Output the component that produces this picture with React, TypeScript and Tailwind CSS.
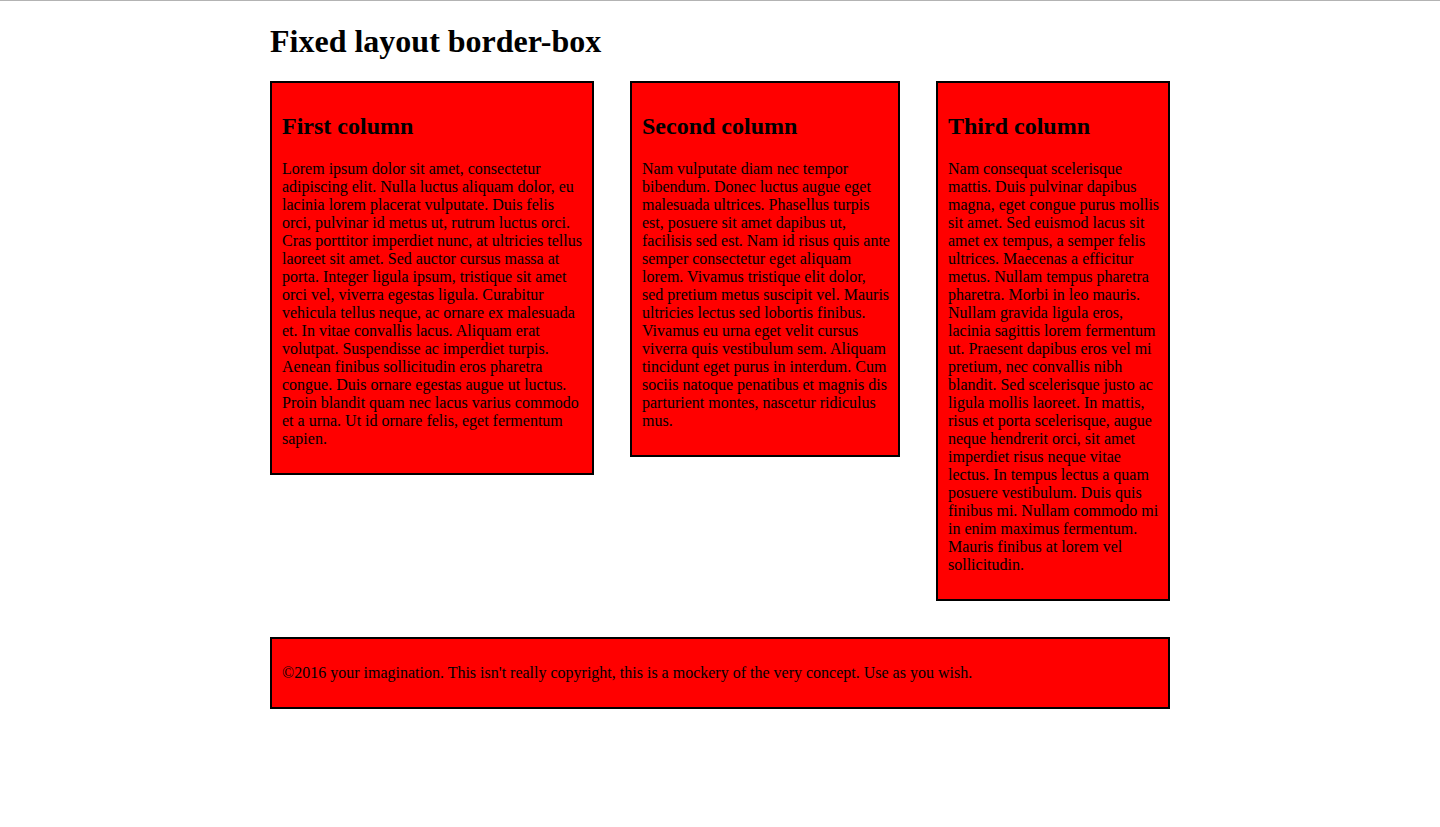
const columns = [
  {
    title: "First column",
    width: "w-[324px]",
    lines: [
      "Lorem ipsum dolor sit amet, consectetur",
      "adipiscing elit. Nulla luctus aliquam dolor, eu",
      "lacinia lorem placerat vulputate. Duis felis",
      "orci, pulvinar id metus ut, rutrum luctus orci.",
      "Cras porttitor imperdiet nunc, at ultricies tellus",
      "laoreet sit amet. Sed auctor cursus massa at",
      "porta. Integer ligula ipsum, tristique sit amet",
      "orci vel, viverra egestas ligula. Curabitur",
      "vehicula tellus neque, ac ornare ex malesuada",
      "et. In vitae convallis lacus. Aliquam erat",
      "volutpat. Suspendisse ac imperdiet turpis.",
      "Aenean finibus sollicitudin eros pharetra",
      "congue. Duis ornare egestas augue ut luctus.",
      "Proin blandit quam nec lacus varius commodo",
      "et a urna. Ut id ornare felis, eget fermentum",
      "sapien.",
    ],
  },
  {
    title: "Second column",
    width: "w-[270px]",
    lines: [
      "Nam vulputate diam nec tempor",
      "bibendum. Donec luctus augue eget",
      "malesuada ultrices. Phasellus turpis",
      "est, posuere sit amet dapibus ut,",
      "facilisis sed est. Nam id risus quis ante",
      "semper consectetur eget aliquam",
      "lorem. Vivamus tristique elit dolor,",
      "sed pretium metus suscipit vel. Mauris",
      "ultricies lectus sed lobortis finibus.",
      "Vivamus eu urna eget velit cursus",
      "viverra quis vestibulum sem. Aliquam",
      "tincidunt eget purus in interdum. Cum",
      "sociis natoque penatibus et magnis dis",
      "parturient montes, nascetur ridiculus",
      "mus.",
    ],
  },
  {
    title: "Third column",
    width: "w-[234px]",
    lines: [
      "Nam consequat scelerisque",
      "mattis. Duis pulvinar dapibus",
      "magna, eget congue purus mollis",
      "sit amet. Sed euismod lacus sit",
      "amet ex tempus, a semper felis",
      "ultrices. Maecenas a efficitur",
      "metus. Nullam tempus pharetra",
      "pharetra. Morbi in leo mauris.",
      "Nullam gravida ligula eros,",
      "lacinia sagittis lorem fermentum",
      "ut. Praesent dapibus eros vel mi",
      "pretium, nec convallis nibh",
      "blandit. Sed scelerisque justo ac",
      "ligula mollis laoreet. In mattis,",
      "risus et porta scelerisque, augue",
      "neque hendrerit orci, sit amet",
      "imperdiet risus neque vitae",
      "lectus. In tempus lectus a quam",
      "posuere vestibulum. Duis quis",
      "finibus mi. Nullam commodo mi",
      "in enim maximus fermentum.",
      "Mauris finibus at lorem vel",
      "sollicitudin.",
    ],
  },
];

export default function App() {
  return (
    <div className="min-h-[827px] bg-white border-t border-[#b3b3b3] font-['Liberation_Serif',serif] text-black">
      <div className="w-[900px] mx-auto">
        <h1 className="text-[32px] font-bold leading-[36px] mt-[22px] mb-[22px]">Fixed layout border-box</h1>
        <div className="flex items-start gap-[36px]">
          {columns.map((col, i) => (
            <div key={i} className={`${col.width} bg-[#ff0000] border-2 border-black px-[10px] py-[10px]`}>
              <h2 className="text-[24px] font-bold leading-[28px] mt-[19px] mb-[20px]">{col.title}</h2>
              <p className="text-[16px] leading-[18px] mt-[16px] mb-[15px]">
                {col.lines.map((line, j) => (
                  <span key={j} className="block whitespace-nowrap">{line}</span>
                ))}
              </p>
            </div>
          ))}
        </div>
        <div className="mt-[36px] bg-[#ff0000] border-2 border-black px-[10px] py-[9px]">
          <p className="text-[16px] leading-[18px] my-[16px]">
            ©2016 your imagination. This isn't really copyright, this is a mockery of the very concept. Use as you wish.
          </p>
        </div>
      </div>
    </div>
  );
}
